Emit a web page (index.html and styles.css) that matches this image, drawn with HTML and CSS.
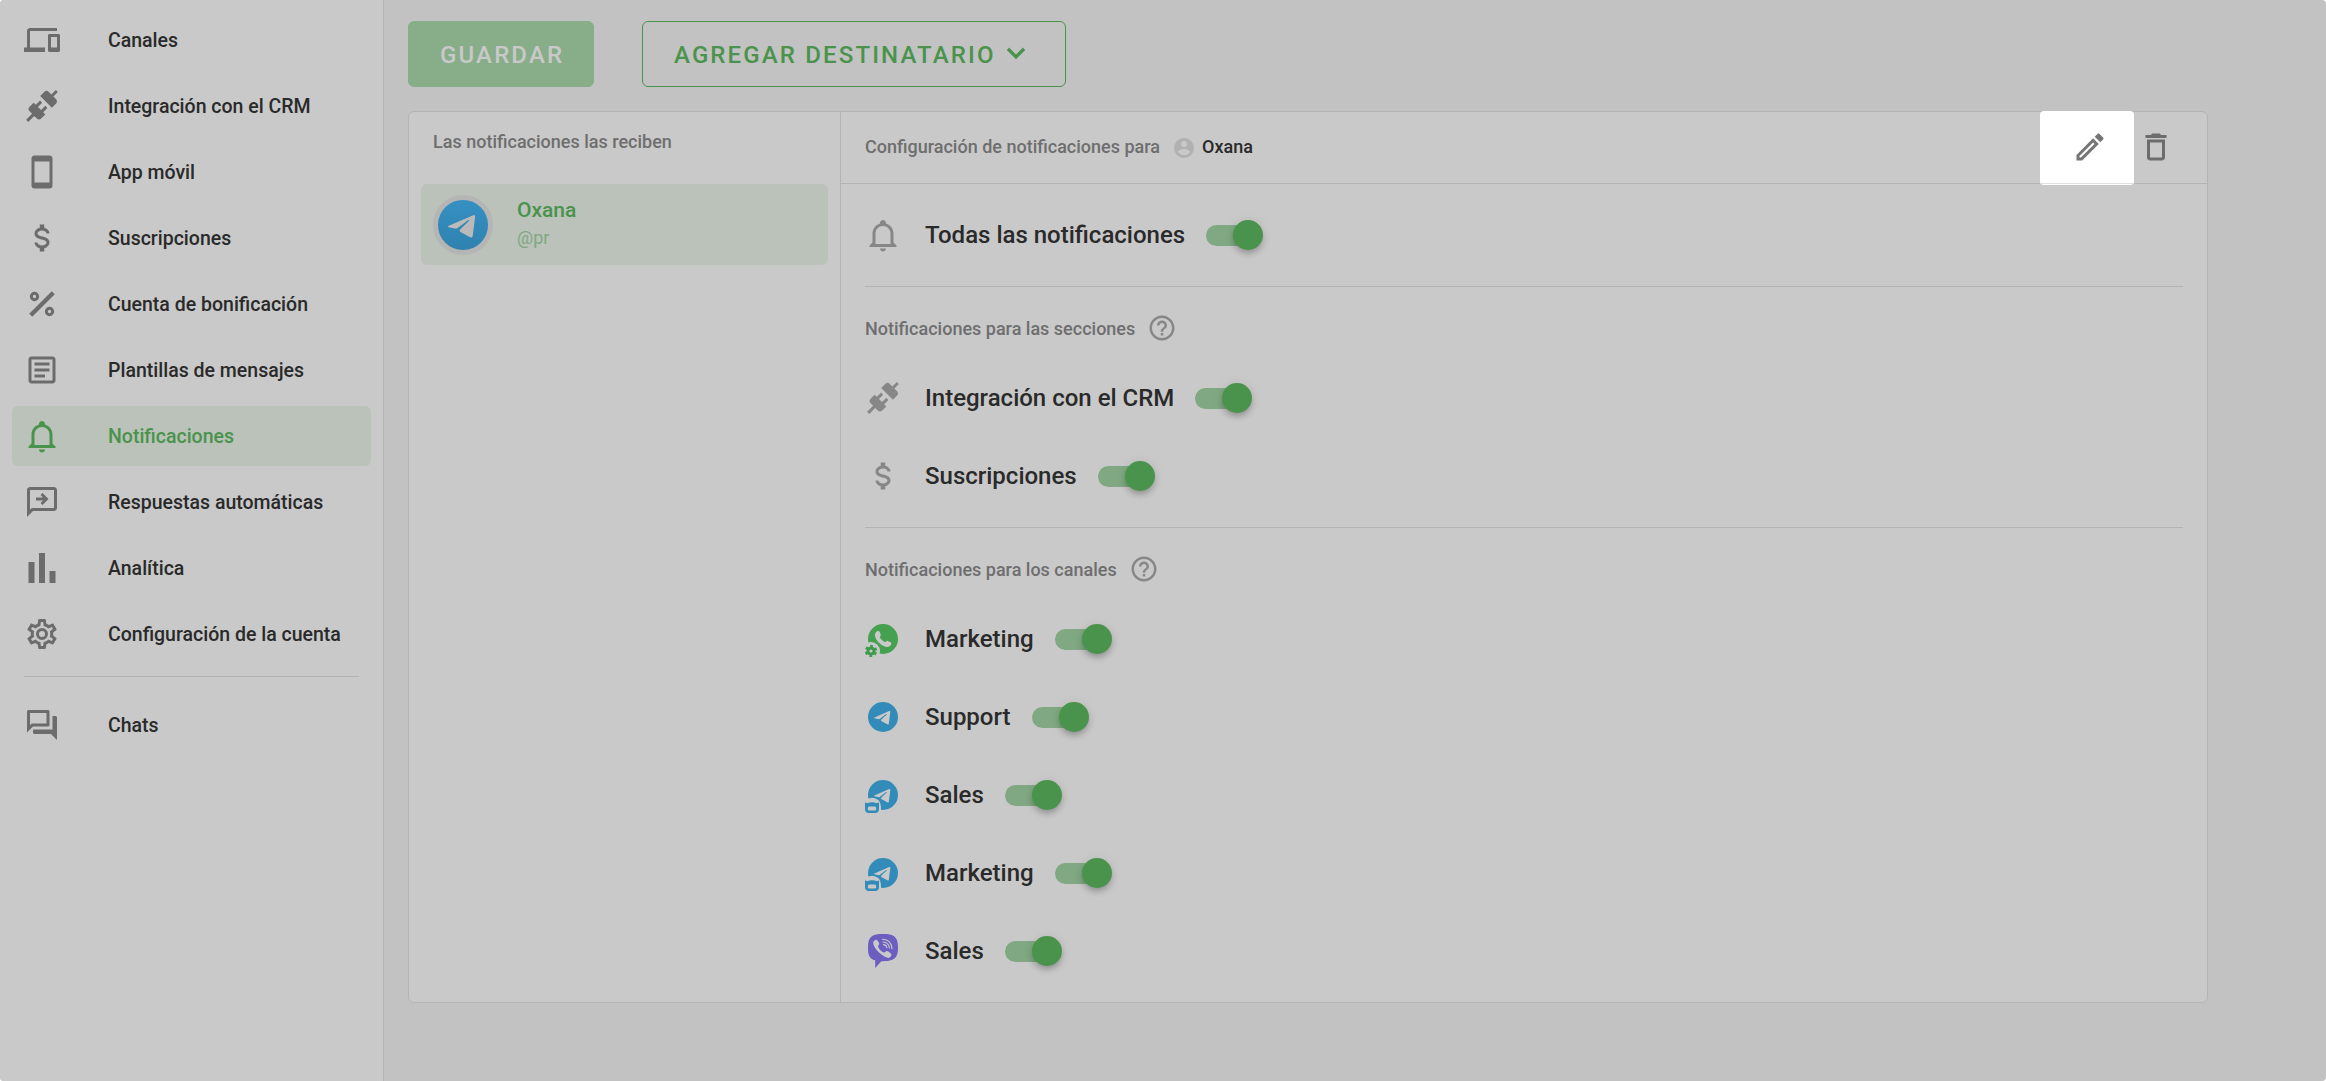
FILE: index.html
```html
<!DOCTYPE html>
<html lang="es">
<head>
    <meta charset="UTF-8">
    <meta name="viewport" content="width=device-width, initial-scale=1.0">
    <title>Notificaciones</title>
    <link rel="stylesheet" href="styles.css">
</head>
<body>
    <svg class="sprite" xmlns="http://www.w3.org/2000/svg">
        <symbol id="devices" viewBox="0 0 24 24"><path d="M4 6h18V4H4c-1.1 0-2 .9-2 2v11H0v3h14v-3H4V6zm19 2h-6c-.55 0-1 .45-1 1v10c0 .55.45 1 1 1h6c.55 0 1-.45 1-1V9c0-.55-.45-1-1-1zm-1 9h-4v-7h4v7z"/></symbol>
        <symbol id="plug" viewBox="0 0 24 24"><path d="M21.4 7.5C22.2 8.3 22.2 9.6 21.4 10.3L18.6 13.1L10.8 5.3L13.6 2.5C14.4 1.7 15.7 1.7 16.4 2.5L18.2 4.3L21.2 1.3L22.6 2.7L19.6 5.7L21.4 7.5M15.6 13.3L14.2 11.9L11.4 14.7L9.3 12.6L12.1 9.8L10.7 8.4L7.9 11.2L6.4 9.8L3.6 12.6C2.8 13.4 2.8 14.7 3.6 15.4L5.4 17.2L1.4 21.2L2.8 22.6L6.8 18.6L8.6 20.4C9.4 21.2 10.7 21.2 11.4 20.4L14.2 17.6L12.8 16.2L15.6 13.3Z"/></symbol>
        <symbol id="phone" viewBox="0 0 24 24"><path d="M17,19H7V5H17M17,1H7C5.89,1 5,1.89 5,3V21A2,2 0 0,0 7,23H17A2,2 0 0,0 19,21V3C19,1.89 18.1,1 17,1Z"/></symbol>
        <symbol id="dollar" viewBox="0 0 24 24"><path d="M7,15H9C9,16.08 10.37,17 12,17C13.63,17 15,16.08 15,15C15,13.9 13.96,13.5 11.76,12.97C9.64,12.44 7,11.78 7,9C7,7.21 8.47,5.69 10.5,5.18V3H13.5V5.18C15.53,5.69 17,7.21 17,9H15C15,7.92 13.63,7 12,7C10.37,7 9,7.92 9,9C9,10.1 10.04,10.5 12.24,11.03C14.36,11.56 17,12.22 17,15C17,16.79 15.53,18.31 13.5,18.82V21H10.5V18.82C8.47,18.31 7,16.79 7,15Z"/></symbol>
        <symbol id="percent" viewBox="0 0 24 24"><path d="M18.5 3.5L20.5 5.5L5.5 20.5L3.5 18.5Z"/><g fill="none" stroke="currentColor" stroke-width="2"><circle cx="7" cy="7" r="2.100"/><circle cx="17" cy="17" r="2.100"/></g></symbol>
        <symbol id="template" viewBox="0 0 24 24"><path d="M5,3C3.89,3 3,3.89 3,5V19C3,20.11 3.89,21 5,21H19C20.11,21 21,20.11 21,19V5C21,3.89 20.11,3 19,3H5M5,5H19V19H5V5M7,7V9H17V7H7M7,11V13H17V11H7M7,15V17H14V15H7Z"/></symbol>
        <symbol id="bell" viewBox="0 0 24 24"><path d="M10 21H14C14 22.1 13.1 23 12 23S10 22.1 10 21M21 19V20H3V19L5 17V11C5 7.9 7 5.2 10 4.3V4C10 2.9 10.9 2 12 2S14 2.9 14 4V4.3C17 5.2 19 7.9 19 11V17L21 19M17 11C17 8.2 14.8 6 12 6S7 8.2 7 11V18H17V11Z"/></symbol>
        <symbol id="reply" viewBox="0 0 24 24"><path d="M20 2H4C2.9 2 2 2.9 2 4V22L6 18H20C21.1 18 22 17.1 22 16V4C22 2.9 21.1 2 20 2M20 16H5.2L4 17.2V4H20V16Z"/><path d="M8 10H15M11.7 6.6L15 10L11.7 13.4" fill="none" stroke="currentColor" stroke-width="1.9"/></symbol>
        <symbol id="chart" viewBox="0 0 24 24"><path d="M3,22V8H7V22H3M10,22V2H14V22H10M17,22V14H21V22H17Z"/></symbol>
        <symbol id="cog" viewBox="0 0 24 24"><path d="M12,8A4,4 0 0,1 16,12A4,4 0 0,1 12,16A4,4 0 0,1 8,12A4,4 0 0,1 12,8M12,10A2,2 0 0,0 10,12A2,2 0 0,0 12,14A2,2 0 0,0 14,12A2,2 0 0,0 12,10M10,22C9.75,22 9.54,21.82 9.5,21.58L9.13,18.93C8.5,18.68 7.96,18.34 7.44,17.94L4.95,18.95C4.73,19.03 4.46,18.95 4.34,18.73L2.34,15.27C2.21,15.05 2.27,14.78 2.46,14.63L4.57,12.97L4.5,12L4.57,11L2.46,9.37C2.27,9.22 2.21,8.95 2.34,8.73L4.34,5.27C4.46,5.05 4.73,4.96 4.95,5.05L7.44,6.05C7.96,5.66 8.5,5.32 9.13,5.07L9.5,2.42C9.54,2.18 9.75,2 10,2H14C14.25,2 14.46,2.18 14.5,2.42L14.87,5.07C15.5,5.32 16.04,5.66 16.56,6.05L19.05,5.05C19.27,4.96 19.54,5.05 19.66,5.27L21.66,8.73C21.79,8.95 21.73,9.22 21.54,9.37L19.43,11L19.5,12L19.43,13L21.54,14.63C21.73,14.78 21.79,15.05 21.66,15.27L19.66,18.73C19.54,18.95 19.27,19.04 19.05,18.95L16.56,17.95C16.04,18.34 15.5,18.68 14.87,18.93L14.5,21.58C14.46,21.82 14.25,22 14,22H10M11.25,4L10.88,6.61C9.68,6.86 8.62,7.5 7.85,8.39L5.44,7.35L4.69,8.65L6.8,10.2C6.4,11.37 6.4,12.64 6.8,13.8L4.68,15.36L5.43,16.66L7.86,15.62C8.63,16.5 9.68,17.14 10.87,17.38L11.24,20H12.76L13.13,17.39C14.32,17.14 15.37,16.5 16.14,15.62L18.57,16.66L19.32,15.36L17.2,13.81C17.6,12.64 17.6,11.37 17.2,10.2L19.31,8.65L18.56,7.35L16.15,8.39C15.38,7.5 14.32,6.86 13.12,6.62L12.75,4H11.25Z"/></symbol>
        <symbol id="forum" viewBox="0 0 24 24"><path d="M15 4v7H5.17L4 12.17V4h11m1-2H3c-.55 0-1 .45-1 1v14l4-4h10c.55 0 1-.45 1-1V3c0-.55-.45-1-1-1zm5 4h-2v9H6v2c0 .55.45 1 1 1h11l4 4V7c0-.55-.45-1-1-1z"/></symbol>
        <symbol id="chevron" viewBox="0 0 24 24"><path d="M7.41,8.58L12,13.17L16.59,8.58L18,10L12,16L6,10L7.41,8.58Z" stroke="currentColor" stroke-width=".3"/></symbol>
        <symbol id="user" viewBox="0 0 24 24"><path d="M12 19.2C9.5 19.2 7.29 17.92 6 16C6.03 14 10 12.9 12 12.9S17.97 14 18 16A7.2 7.2 0 0 1 12 19.2M12 5A3 3 0 0 1 15 8 3 3 0 0 1 12 11 3 3 0 0 1 9 8 3 3 0 0 1 12 5M12 2A10 10 0 0 0 2 12 10 10 0 0 0 12 22 10 10 0 0 0 22 12C22 6.47 17.5 2 12 2Z"/></symbol>
        <symbol id="pencil" viewBox="0 0 24 24"><path d="M14.06 9.02l.92.92L5.92 19H5v-.92l9.06-9.06M17.66 3c-.25 0-.51.1-.7.29l-1.83 1.83 3.75 3.75 1.83-1.83c.39-.39.39-1.02 0-1.41l-2.34-2.34c-.2-.2-.45-.29-.71-.29zm-3.6 3.19L3 17.25V21h3.75L17.81 9.94l-3.75-3.75z"/></symbol>
        <symbol id="trash" viewBox="0 0 24 24"><path d="M6 19c0 1.1.9 2 2 2h8c1.1 0 2-.9 2-2V7H6v12zM8 9h8v10H8V9zm7.5-5l-1-1h-5l-1 1H5v2h14V4h-3.5z"/></symbol>
        <symbol id="help" viewBox="0 0 24 24"><path d="M11 18h2v-2h-2v2zm1-16C6.48 2 2 6.48 2 12s4.48 10 10 10 10-4.48 10-10S17.52 2 12 2zm0 18c-4.41 0-8-3.59-8-8s3.59-8 8-8 8 3.59 8 8-3.59 8-8 8zm0-14c-2.21 0-4 1.79-4 4h2c0-1.1.9-2 2-2s2 .9 2 2c0 2-3 1.75-3 5h2c0-2.25 3-2.5 3-5 0-2.21-1.79-4-4-4z"/></symbol>

        <!-- canales -->
        <symbol id="whatsapp" viewBox="0 0 36 36">
            <circle cx="18" cy="18" r="15" fill="#45a050"/>
            <path d="M12.2 10.2C13.2 9.6 14.2 9.9 14.6 10.8L15.8 13.6C16.1 14.4 15.2 15.4 14.7 16C15.8 18.3 17.9 20.3 20.4 21.3C21 20.7 21.8 19.5 22.7 19.9L25.6 21.3C26.5 21.8 26.6 22.6 26.1 23.6C25.2 25.4 23.2 26.4 21 25.8C15.8 24.5 11 19.8 10 15C9.5 12.9 10.6 11 12.2 10.2Z" fill="#c9c9c9"/>
            <circle cx="6" cy="30" r="9" fill="#c9c9c9"/>
            <circle cx="6" cy="30" r="3.1" fill="none" stroke="#3d9a4b" stroke-width="3"/>
            <circle cx="6" cy="30" r="5.1" fill="none" stroke="#3d9a4b" stroke-width="2.2" stroke-dasharray="2.7 2.64" stroke-dashoffset="-1.3"/>
        </symbol>
        <symbol id="plane" viewBox="0 0 36 36">
            <path d="M9.4 18.4L24.2 12.1Q25.4 11.7 25.3 12.9L23.8 24.7Q23.5 26 22.3 25.3L16.2 22Q15.6 21.2 16.4 20.5L22 15.2Q21.500 14.900 20.800 15.300L14.600 19.900Q13.900 20.300 13 20.100L9.400 19.300Q8.600 18.900 9.400 18.400Z"/>
        </symbol>
        <symbol id="telegram" viewBox="0 0 36 36">
            <circle cx="18" cy="18" r="15" fill="#328bb9"/>
            <use href="#plane" fill="#c9c9c9"/>
        </symbol>
        <symbol id="telegram-bot" viewBox="0 0 36 36">
            <use href="#telegram"/>
            <path d="M0 24Q6 18.500 12.500 22.500Q16.500 25 16 33V36H0Z" fill="#c9c9c9"/>
            <path d="M0 25.2L2 26.3Q7 24 12 26.3L14 25.2V32Q14 36 10 36H4Q0 36 0 32Z" fill="#328bb9"/>
            <rect x="2.8" y="29.5" width="8.4" height="4" rx="1.6" fill="#c9c9c9"/>
        </symbol>
        <symbol id="viber" viewBox="0 0 36 36">
            <path d="M18 1C28.5 1 33 3 33 14.5C33 26 28.5 28.2 16.3 28.2L10.2 35V27.3C4.5 25.8 3 22.5 3 14.5C3 3 7.5 1 18 1Z" fill="#6c5dc0"/>
            <path d="M10 7.3C11.2 6.4 12 6.9 12.8 8C14 9.6 14.9 10.8 13.7 12C12.7 13 13 13.6 13.7 14.9C15 17.2 16.6 18.6 18.7 19.4C20 19.9 20.6 18 21.8 18.1C22.7 18.2 25.2 20 26 20.8C27.3 22 25.4 24.7 23.5 24.9C20.5 24.9 9 17.5 8.2 9.7C8.1 8.6 8.9 8 10 7.3Z" fill="#c9c9c9"/>
            <g fill="none" stroke="#c9c9c9" stroke-width="1.1" stroke-linecap="round"><path d="M17.5 6.3Q26.3 6.8 27 15.800"/><path d="M18 9Q23.8 9.5 24.4 15"/><path d="M18.5 11.6Q21.5 11.8 21.9 14.6"/></g>
        </symbol>
    </svg>

    <div class="app">
        <aside class="sidebar">
            <a class="menu-item"><svg class="icon"><use href="#devices"/></svg><span>Canales</span></a>
            <a class="menu-item"><svg class="icon"><use href="#plug"/></svg><span>Integración con el CRM</span></a>
            <a class="menu-item"><svg class="icon"><use href="#phone"/></svg><span>App móvil</span></a>
            <a class="menu-item"><svg class="icon"><use href="#dollar"/></svg><span>Suscripciones</span></a>
            <a class="menu-item"><svg class="icon"><use href="#percent"/></svg><span>Cuenta de bonificación</span></a>
            <a class="menu-item"><svg class="icon"><use href="#template"/></svg><span>Plantillas de mensajes</span></a>
            <a class="menu-item active"><svg class="icon"><use href="#bell"/></svg><span>Notificaciones</span></a>
            <a class="menu-item"><svg class="icon"><use href="#reply"/></svg><span>Respuestas automáticas</span></a>
            <a class="menu-item"><svg class="icon"><use href="#chart"/></svg><span>Analítica</span></a>
            <a class="menu-item"><svg class="icon"><use href="#cog"/></svg><span>Configuración de la cuenta</span></a>
            <hr class="menu-divider">
            <a class="menu-item"><svg class="icon"><use href="#forum"/></svg><span>Chats</span></a>
        </aside>

        <main class="main">
            <div class="toolbar">
                <button class="btn btn-save">Guardar</button>
                <button class="btn btn-add">Agregar destinatario<svg class="icon"><use href="#chevron"/></svg></button>
            </div>

            <div class="card">
                <div class="recipients">
                    <h2 class="caption">Las notificaciones las reciben</h2>
                    <div class="recipient">
                        <div class="avatar"><svg><use href="#plane"/></svg></div>
                        <div class="recipient-text">
                            <span class="recipient-name">Oxana</span>
                            <span class="recipient-nick">@pr</span>
                        </div>
                    </div>
                </div>

                <div class="settings">
                    <div class="settings-header">
                        <span class="caption">Configuración de notificaciones para</span>
                        <svg class="user-icon"><use href="#user"/></svg>
                        <span class="user-name">Oxana</span>
                        <button class="icon-btn edit-btn"><svg class="icon"><use href="#pencil"/></svg></button>
                        <button class="icon-btn"><svg class="icon"><use href="#trash"/></svg></button>
                    </div>

                    <section class="group">
                        <div class="row"><svg class="icon"><use href="#bell"/></svg><span class="label">Todas las notificaciones</span><span class="switch"></span></div>
                    </section>

                    <section class="group">
                        <h3 class="group-title caption">Notificaciones para las secciones<svg class="help"><use href="#help"/></svg></h3>
                        <div class="row"><svg class="icon"><use href="#plug"/></svg><span class="label">Integración con el CRM</span><span class="switch"></span></div>
                        <div class="row"><svg class="icon"><use href="#dollar"/></svg><span class="label">Suscripciones</span><span class="switch"></span></div>
                    </section>

                    <section class="group">
                        <h3 class="group-title caption">Notificaciones para los canales<svg class="help"><use href="#help"/></svg></h3>
                        <div class="row"><svg class="icon"><use href="#whatsapp"/></svg><span class="label">Marketing</span><span class="switch"></span></div>
                        <div class="row"><svg class="icon"><use href="#telegram"/></svg><span class="label">Support</span><span class="switch"></span></div>
                        <div class="row"><svg class="icon"><use href="#telegram-bot"/></svg><span class="label">Sales</span><span class="switch"></span></div>
                        <div class="row"><svg class="icon"><use href="#telegram-bot"/></svg><span class="label">Marketing</span><span class="switch"></span></div>
                        <div class="row"><svg class="icon"><use href="#viber"/></svg><span class="label">Sales</span><span class="switch"></span></div>
                    </section>
                </div>
            </div>
        </main>
    </div>
</body>
</html>
```
FILE: styles.css
```css
* {
    box-sizing: border-box;
}
body {
    margin: 0;
    background: #ffffff;
    font-family: Roboto, 'Liberation Sans', sans-serif;
    font-weight: 500;
    color: #2a2a2a;
}
.sprite {
    display: none;
}
.app {
    display: flex;
    height: 100vh;
    border-radius: 4px;
    overflow: hidden;
    background: #c2c2c2;
}
.icon {
    width: 36px;
    height: 36px;
    flex: none;
    fill: currentColor;
}

/* menu lateral */
.sidebar {
    width: 384px;
    flex: none;
    padding: 10px 12px;
    background: #c9c9c9;
    border-right: 1px solid #b3b3b3;
}
.menu-item {
    display: flex;
    align-items: center;
    height: 60px;
    margin-bottom: 6px;
    padding-left: 12px;
    border-radius: 6px;
    font-size: 19.5px;
}
.menu-item .icon {
    margin: 0 48px 1px 0;
    color: #6c6c6c;
}
.menu-item.active {
    background: #bac2b9;
    color: #4a934c;
}
.menu-item.active .icon {
    color: #4a934c;
}
.menu-divider {
    height: 1px;
    margin: 12px 12px 18px;
    border: none;
    background: #b3b3b3;
}

/* contenido */
.main {
    flex: 1;
    padding: 21px 24px;
}
.toolbar {
    display: flex;
    gap: 48px;
    margin-bottom: 24px;
}
button {
    font-family: inherit;
    font-weight: 500;
    border: none;
    background: none;
    padding: 0;
}
.btn {
    display: flex;
    align-items: center;
    height: 66px;
    padding: 1px 0 0 31px;
    border: 1px solid #4a934c;
    border-radius: 6px;
    font-size: 24px;
    letter-spacing: 2.14px;
    text-transform: uppercase;
    color: #4a934c;
}
.btn-save {
    width: 186px;
    background: #87ad89;
    border-color: #87ad89;
    color: #c9c9c9;
}
.btn-add {
    width: 424px;
}
.btn-add .icon {
    margin: 0 0 3px 2px;
}
.card {
    display: flex;
    width: 1800px;
    height: 892px;
    background: #c9c9c9;
    border: 1px solid #b3b3b3;
    border-radius: 6px;
}
.caption {
    margin: 0;
    font-size: 18px;
    font-weight: 500;
    color: #6e6e6e;
}
.recipients {
    width: 432px;
    border-right: 1px solid #b3b3b3;
    padding: 0 12px;
}
.recipients .caption {
    padding: 0 12px;
    height: 72px;
    line-height: 59px;
}
.recipient {
    display: flex;
    align-items: center;
    height: 81px;
    padding-left: 12px;
    border-radius: 6px;
    background: #bac2b9;
}
.avatar {
    display: flex;
    align-items: center;
    justify-content: center;
    width: 60px;
    height: 60px;
    margin-right: 24px;
    border: 5px solid #b5b5b5;
    border-radius: 50%;
    background: linear-gradient(#3590c2, #2f82af);
}
.avatar svg {
    width: 60px;
    height: 60px;
    flex: none;
    fill: #bababa;
}
.recipient-text {
    display: flex;
    flex-direction: column;
    padding-bottom: 2px;
    line-height: 27px;
}
.recipient-name {
    font-size: 21px;
    color: #4a934c;
}
.recipient-nick {
    font-size: 18px;
    font-weight: 400;
    color: #80a882;
}
.settings {
    flex: 1;
}
.settings-header {
    display: flex;
    align-items: center;
    height: 72px;
    padding: 0 33px 0 24px;
    border-bottom: 1px solid #b3b3b3;
}
.settings-header .caption {
    padding-bottom: 2px;
}
.user-icon {
    width: 24px;
    height: 24px;
    margin: 1px 6px 0 12px;
    fill: #b1b1b1;
}
.user-name {
    padding-bottom: 2px;
    font-size: 18px;
}
.icon-btn {
    display: flex;
    padding-bottom: 1px;
    color: #6c6c6c;
}
.edit-btn {
    position: relative;
    align-items: center;
    width: 94px;
    height: 74px;
    margin: -1px 4px -2px auto;
    padding: 0 0 2px 32px;
    border-radius: 4px;
    background: #ffffff;
    color: #757575;
}
.edit-btn::after {
    content: '';
    position: absolute;
    left: 0;
    right: 0;
    bottom: 1px;
    height: 1px;
    background: #e0e0e0;
}
.group {
    margin: 0 24px;
    padding: 12px 0;
    border-bottom: 1px solid #b3b3b3;
}
.group:last-child {
    border-bottom: none;
}
.group-title {
    display: flex;
    align-items: center;
    height: 60px;
    padding-bottom: 2px;
}
.help {
    width: 30px;
    height: 30px;
    margin-left: 12px;
    fill: #878787;
}
.row {
    display: flex;
    align-items: center;
    height: 78px;
}
.row .icon {
    margin-right: 24px;
    color: #878787;
}
.label {
    font-size: 24px;
}
.switch {
    position: relative;
    width: 54px;
    height: 21px;
    margin-left: 21px;
    border-radius: 11px;
    background: #80a882;
}
.switch::after {
    content: '';
    position: absolute;
    top: -5px;
    right: -3px;
    width: 30px;
    height: 30px;
    border-radius: 50%;
    background: #4a934c;
    box-shadow: 0 4px 6px -1px rgba(0, 0, 0, 0.25), 0 1px 12px rgba(0, 0, 0, 0.08);
}
```
